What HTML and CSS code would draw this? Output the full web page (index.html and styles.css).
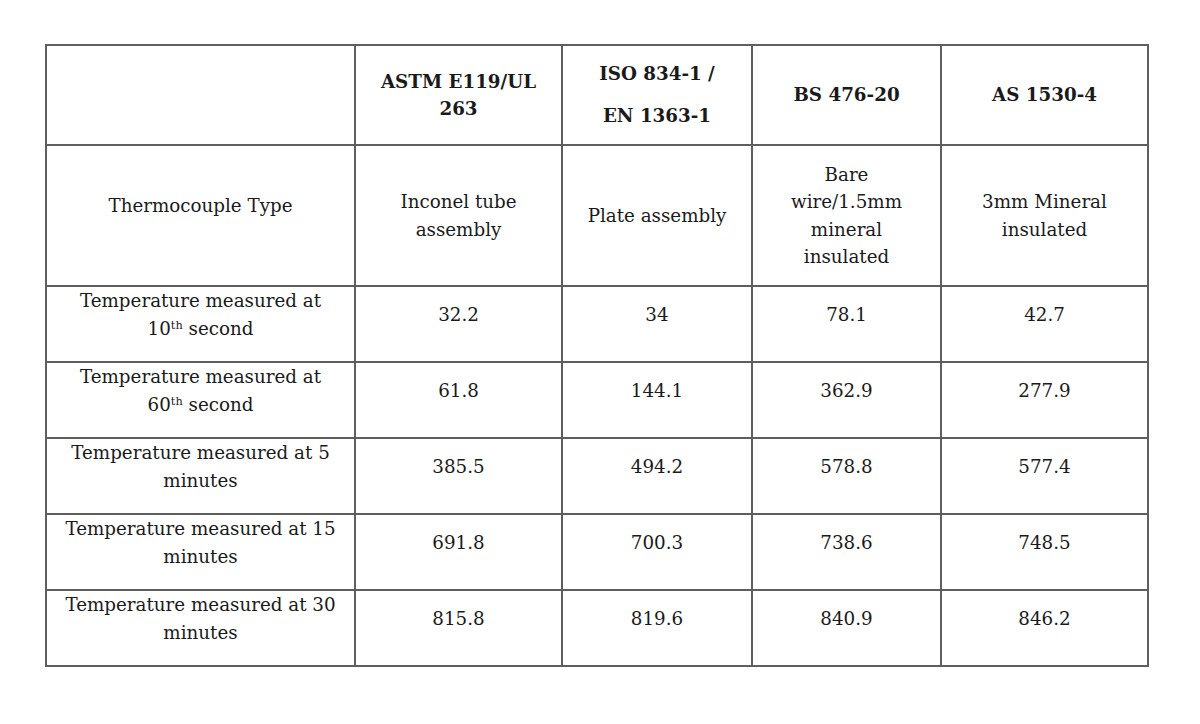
FILE: index.html
```html
<!DOCTYPE html>
<html>
<head>
<meta charset="utf-8">
<link rel="stylesheet" href="styles.css">
</head>
<body>
<table class="grid">
  <colgroup>
    <col class="c1"><col class="c2"><col class="c3"><col class="c4"><col class="c5">
  </colgroup>
  <tr class="head">
    <td></td>
    <td>ASTM E119/UL<br>263</td>
    <td><div class="para">ISO 834-1 /</div><div class="para">EN 1363-1</div></td>
    <td>BS 476-20</td>
    <td>AS 1530-4</td>
  </tr>
  <tr class="type">
    <td class="lift">Thermocouple Type</td>
    <td>Inconel tube<br>assembly</td>
    <td>Plate assembly</td>
    <td>Bare<br>wire/1.5mm<br>mineral<br>insulated</td>
    <td>3mm Mineral<br>insulated</td>
  </tr>
  <tr class="data">
    <td>Temperature measured at<br>10<sup>th</sup> second</td>
    <td>32.2</td><td>34</td><td>78.1</td><td>42.7</td>
  </tr>
  <tr class="data">
    <td>Temperature measured at<br>60<sup>th</sup> second</td>
    <td>61.8</td><td>144.1</td><td>362.9</td><td>277.9</td>
  </tr>
  <tr class="data">
    <td>Temperature measured at 5<br>minutes</td>
    <td>385.5</td><td>494.2</td><td>578.8</td><td>577.4</td>
  </tr>
  <tr class="data">
    <td>Temperature measured at 15<br>minutes</td>
    <td>691.8</td><td>700.3</td><td>738.6</td><td>748.5</td>
  </tr>
  <tr class="data">
    <td>Temperature measured at 30<br>minutes</td>
    <td>815.8</td><td>819.6</td><td>840.9</td><td>846.2</td>
  </tr>
</table>
</body>
</html>
```

FILE: styles.css
```css
html, body {
  margin: 0;
  padding: 0;
  background: #ffffff;
}
body {
  padding: 44px 0 0 45px;
  font-family: "DejaVu Serif", "Liberation Serif", serif;
  font-size: 18.3px;
  line-height: 27.5px;
  color: #1a1a1a;
}
.grid {
  border-collapse: collapse;
  table-layout: fixed;
  width: 1102px;
}
.c1 { width: 309px; }
.c2 { width: 207px; }
.c3 { width: 190px; }
.c4 { width: 189px; }
.c5 { width: 207px; }
.grid td {
  border: 2px solid #5f5f5f;
  text-align: center;
  vertical-align: middle;
  padding: 0 6px;
}
.head td {
  height: 98px;
  font-weight: bold;
}
.para + .para {
  margin-top: 14.5px;
}
.type td {
  height: 120px;
}
.type td.lift {
  padding-bottom: 19px;
}
.data td {
  height: 55px;
  padding-bottom: 19px;
}
sup {
  font-size: 0.62em;
  line-height: 0;
  vertical-align: 0.55em;
}
```
